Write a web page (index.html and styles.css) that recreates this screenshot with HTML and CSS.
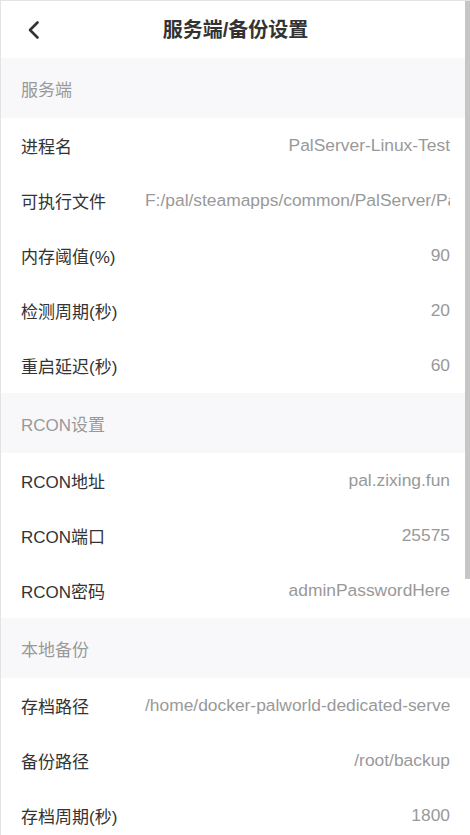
FILE: index.html
```html
<!DOCTYPE html>
<html lang="zh-CN">
<head>
<meta charset="utf-8">
<title>服务端/备份设置</title>
<link rel="stylesheet" href="styles.css">
</head>
<body>
<div class="frame">
  <div class="page">
    <header class="nav">
      <span class="back">
        <svg width="14" height="20" viewBox="0 0 14 20"><path d="M10.5 2.5 L3 10 L10.5 17.5" fill="none" stroke="#333" stroke-width="2.6" stroke-linecap="round" stroke-linejoin="round"/></svg>
      </span>
      <h1 class="title">服务端/备份设置</h1>
    </header>

    <section>
      <div class="group-title">服务端</div>
      <div class="row"><span class="label">进程名</span><span class="value">PalServer-Linux-Test</span></div>
      <div class="row"><span class="label">可执行文件</span><span class="value clip">F:/pal/steamapps/common/PalServer/PalServer.exe</span></div>
      <div class="row"><span class="label">内存阈值(%)</span><span class="value">90</span></div>
      <div class="row"><span class="label">检测周期(秒)</span><span class="value">20</span></div>
      <div class="row"><span class="label">重启延迟(秒)</span><span class="value">60</span></div>
    </section>

    <section>
      <div class="group-title">RCON设置</div>
      <div class="row"><span class="label">RCON地址</span><span class="value">pal.zixing.fun</span></div>
      <div class="row"><span class="label">RCON端口</span><span class="value">25575</span></div>
      <div class="row"><span class="label">RCON密码</span><span class="value">adminPasswordHere</span></div>
    </section>

    <section>
      <div class="group-title">本地备份</div>
      <div class="row"><span class="label">存档路径</span><span class="value clip">/home/docker-palworld-dedicated-server/game/Pal/Saved</span></div>
      <div class="row"><span class="label">备份路径</span><span class="value">/root/backup</span></div>
      <div class="row"><span class="label">存档周期(秒)</span><span class="value">1800</span></div>
    </section>
  </div>
  <div class="scroll-thumb"></div>
</div>
</body>
</html>
```

FILE: styles.css
```css
html, body {
  margin: 0;
  padding: 0;
  background: #ffffff;
}

body {
  font-family: "Liberation Sans", Arial, "Noto Sans CJK SC", sans-serif;
  color: #333333;
}

.frame {
  position: relative;
  height: 835px;
  box-sizing: border-box;
  border-top: 1px solid #e3e3e3;
  border-left: 1px solid #e3e3e3;
  overflow: hidden;
}

.page {
  height: 834px;
  overflow: hidden;
}

.scroll-thumb {
  position: absolute;
  top: 0;
  right: 0;
  width: 5px;
  height: 578px;
  background: #c6c6c6;
}

.nav {
  height: 57px;
  display: flex;
  align-items: center;
  justify-content: center;
  position: relative;
  background: #ffffff;
}

.back {
  position: absolute;
  left: 26px;
  top: 19px;
  width: 14px;
  height: 20px;
  display: flex;
}

.title {
  margin: 0 0 3px;
  font-size: 20px;
  font-weight: bold;
  color: #333333;
  padding-left: 0;
}

.group-title {
  height: 60px;
  display: flex;
  align-items: center;
  padding-left: 20px;
  background: #f8f8fa;
  color: #999999;
  font-size: 17px;
}

.row {
  height: 55px;
  display: flex;
  align-items: center;
  padding: 0 20px 0 20px;
  font-size: 17px;
  background: #ffffff;
}

.label {
  flex: 0 0 124px;
  color: #333333;
  white-space: nowrap;
}

.value {
  flex: 1 1 auto;
  min-width: 0;
  text-align: right;
  color: #999999;
  font-size: 17.4px;
  white-space: nowrap;
  overflow: hidden;
}

.value.clip {
  text-align: left;
}
```
